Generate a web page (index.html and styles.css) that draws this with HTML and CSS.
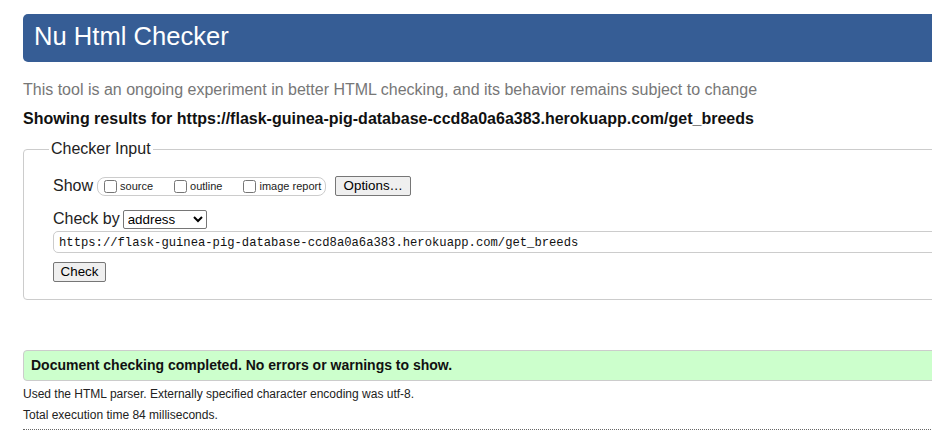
FILE: index.html
```html
<!DOCTYPE html>
<html lang="en">
<head>
<meta charset="utf-8">
<title>Nu Html Checker</title>
<link rel="stylesheet" href="styles.css">
</head>
<body>
<div class="page">
  <h1 class="title-bar">Nu Html Checker</h1>
  <p class="intro">This tool is an ongoing experiment in better HTML checking, and its behavior remains subject to change</p>
  <p class="showing">Showing results for https://flask-guinea-pig-database-ccd8a0a6a383.herokuapp.com/get_breeds</p>
  <fieldset class="checker">
    <legend class="checker-legend">Checker Input</legend>
    <div class="checker-body">
      <div class="row show-row">
        <span class="row-label">Show</span>
        <span class="opt-group">
          <label class="opt opt-source"><input type="checkbox" class="cb">source</label>
          <label class="opt opt-outline"><input type="checkbox" class="cb">outline</label>
          <label class="opt"><input type="checkbox" class="cb">image report</label>
        </span>
        <button class="btn btn-options" type="button">Options…</button>
      </div>
      <div class="row by-row">
        <span class="row-label">Check by</span>
        <select class="by-select"><option>address</option></select>
      </div>
      <input class="url-input" type="text" value="https://flask-guinea-pig-database-ccd8a0a6a383.herokuapp.com/get_breeds">
      <button class="btn btn-check" type="button">Check</button>
    </div>
  </fieldset>
  <p class="success">Document checking completed. No errors or warnings to show.</p>
  <p class="meta">Used the HTML parser. Externally specified character encoding was utf-8.</p>
  <p class="meta">Total execution time 84 milliseconds.</p>
  <hr class="dots">
</div>
</body>
</html>
```

FILE: styles.css
```css
html {
  overflow: hidden;
}
body {
  margin: 0;
  font-family: "Liberation Sans", Arial, sans-serif;
  color: #111;
  background: #fff;
}
.page {
  width: 1000px;
  padding: 14px 0 0 23px;
}
.title-bar {
  margin: 0;
  height: 48px;
  line-height: 45px;
  padding-left: 11px;
  background: #365d95;
  color: #fff;
  font-size: 25.6px;
  font-weight: normal;
  border-radius: 5px;
}
.intro {
  margin: 18px 0 0;
  font-size: 16px;
  line-height: 20px;
  color: #777;
}
.showing {
  margin: 9px 0 0;
  font-size: 16px;
  line-height: 20px;
  font-weight: bold;
  color: #111;
}
.checker {
  margin: 11px 0 0;
  padding: 0;
  border: 1px solid #ccc;
  border-radius: 4px;
  min-width: 0;
}
.checker-legend {
  margin-left: 25px;
  padding: 0 2px;
  font-size: 16px;
  color: #222;
}
.checker-body {
  padding: 18px 0 17px 29px;
  display: flex;
  flex-direction: column;
  align-items: flex-start;
}
.row {
  display: flex;
  align-items: center;
}
.row-label {
  font-size: 16px;
  color: #222;
}
.show-row {
  height: 20px;
}
.opt-group {
  display: flex;
  align-items: center;
  height: 17px;
  margin-left: 4px;
  padding: 0 4px 0 2px;
  border: 1px solid #ccc;
  border-radius: 8px;
}
.opt {
  display: flex;
  align-items: center;
  font-size: 11px;
  color: #222;
}
.opt-source {
  margin-right: 17px;
}
.opt-outline {
  margin-right: 17px;
}
.cb {
  width: 13px;
  height: 13px;
  margin: 0 3px 0 4px;
}
.btn {
  font-family: "Liberation Sans", Arial, sans-serif;
  font-size: 13.33px;
  color: #000;
  background: #efefef;
  border: 1px solid #767676;
  border-radius: 2px;
  padding: 0 6px;
  height: 20px;
  line-height: 18px;
}
.btn-options {
  margin-left: 9px;
  width: 76px;
}
.by-row {
  margin-top: 13px;
  height: 20px;
}
.by-select {
  margin-left: 3px;
  width: 84px;
  height: 19px;
  font-family: "Liberation Sans", Arial, sans-serif;
  font-size: 13.33px;
  border: 1px solid #767676;
  border-radius: 2px;
  background: #fff;
  color: #000;
}
.url-input {
  margin-top: 2px;
  box-sizing: border-box;
  width: 920px;
  height: 22px;
  padding: 1px 5px 0;
  border: 1px solid #ccc;
  border-radius: 5px;
  font-family: "Liberation Mono", "DejaVu Sans Mono", monospace;
  font-size: 12.2px;
  color: #111;
}
.btn-check {
  margin-top: 9px;
  width: 53px;
}
.success {
  margin: 50px 0 0;
  box-sizing: border-box;
  height: 31px;
  line-height: 29px;
  padding-left: 7px;
  border: 1px solid #ccc;
  border-radius: 4px;
  background: #ccffcc;
  font-size: 14px;
  font-weight: bold;
  color: #111;
}
.meta {
  margin: 5px 0 0;
  font-size: 12px;
  line-height: 17px;
  color: #222;
}
.meta + .meta {
  margin-top: 4px;
}
.dots {
  margin: 5px 0 0;
  border: 0;
  border-top: 1px dotted #666;
  height: 0;
}
```
